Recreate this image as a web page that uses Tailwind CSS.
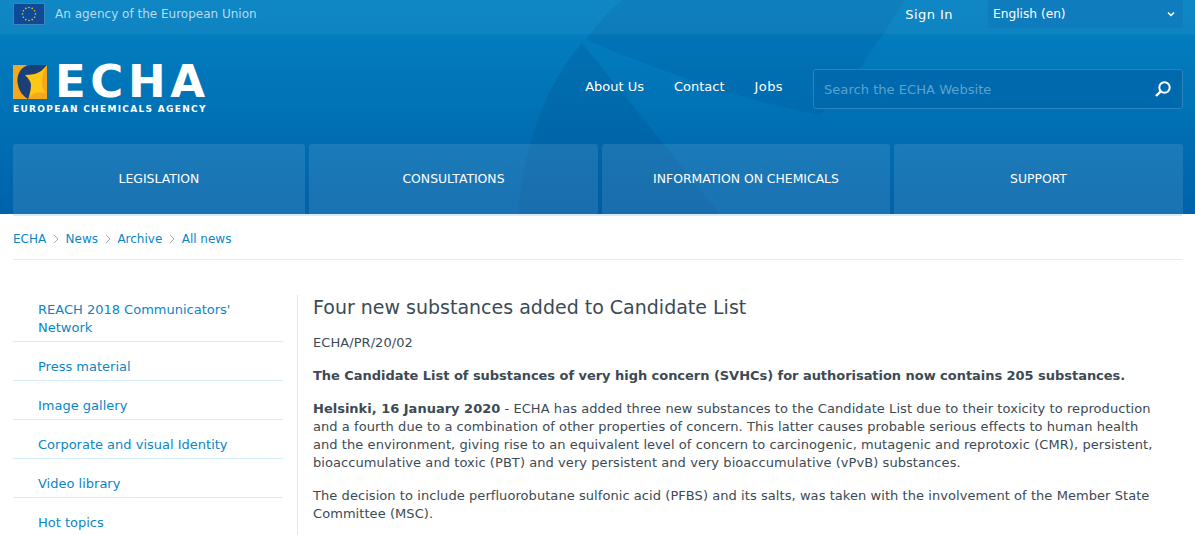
<!DOCTYPE html>
<html lang="en">
<head>
  <meta charset="UTF-8" />
  <title>Four new substances added to Candidate List - ECHA</title>
  <script src="https://cdn.jsdelivr.net/npm/@tailwindcss/browser@4"></script>
</head>
<body class="bg-white font-['DejaVu_Sans','Liberation_Sans',sans-serif] text-[13px] text-[#3c4a54] overflow-hidden h-[535px]">

  <!-- Header -->
  <header class="relative h-[214px] bg-gradient-to-b from-[#0382c2] to-[#0062aa] overflow-hidden">
    <svg class="absolute inset-0" width="1195" height="214" viewBox="0 0 1195 214">
      <path d="M582 43 C545 85 522 150 518 214 L720 214 Z" fill="#00508f" fill-opacity="0.24"/>
      <path d="M586 40 C640 62 720 95 820 115 C850 85 880 40 905 0 L622 0 C608 12 595 26 586 40 Z" fill="#00508f" fill-opacity="0.18"/>
    </svg>

    <!-- Top bar -->
    <div class="relative h-[34px] bg-white/5 flex items-start pl-[13px] pr-[12px]">
      <div class="flex items-center h-[28px] gap-[10px]">
        <svg width="32" height="22" viewBox="0 0 32 22" class="shrink-0">
          <rect x="0.5" y="0.5" width="31" height="21" fill="#0f4a96" stroke="#3f85bd"/>
          <g fill="#e6d13a">
            <circle cx="16" cy="4.5" r="0.8"/><circle cx="19.2" cy="5.4" r="0.8"/><circle cx="21.6" cy="7.8" r="0.8"/>
            <circle cx="22.5" cy="11" r="0.8"/><circle cx="21.6" cy="14.2" r="0.8"/><circle cx="19.2" cy="16.6" r="0.8"/>
            <circle cx="16" cy="17.5" r="0.8"/><circle cx="12.8" cy="16.6" r="0.8"/><circle cx="10.4" cy="14.2" r="0.8"/>
            <circle cx="9.5" cy="11" r="0.8"/><circle cx="10.4" cy="7.8" r="0.8"/><circle cx="12.8" cy="5.4" r="0.8"/>
          </g>
        </svg>
        <span class="text-[12px] text-[#b5dcef]">An agency of the European Union</span>
      </div>
      <a class="ml-auto mt-[5px] text-[13px] tracking-[0.45px] text-white">Sign In</a>
      <div class="ml-[35px] w-[195px] h-[28px] bg-[#0f7dbd] flex items-center justify-between pl-[5px] pr-[8px] text-[12.2px] text-white">
        <span>English (en)</span>
        <svg width="8" height="6" viewBox="0 0 8 6"><path d="M1 1.5 L4 4.5 L7 1.5" fill="none" stroke="#fff" stroke-width="1.5"/></svg>
      </div>
    </div>

    <!-- Logo row -->
    <div class="relative flex items-start pl-[13px] pr-[12px] pt-[30px] h-[110px]">
      <div>
        <div class="flex items-center gap-[8px] h-[36px]">
          <svg width="34" height="34" viewBox="0 0 34 34" class="shrink-0">
            <rect width="34" height="34" fill="#f5a81c"/>
            <path d="M34 0 L15 0 C6 3 3 12 5 20 C6 26 10 31 15 34 L20 26 L24 12 Z" fill="#1d3f78"/>
            <path d="M33.5 0.5 C29 6 25 10 12 10 C16 14 18 17 18 20 C18 24 17 28 15.5 33 C19 28 25 26 33 28.5 C29 23 26 17 33.5 0.5 Z" fill="#fdc813"/>
          </svg>
          <span class="inline-block text-[45px] leading-[36px] font-bold text-white tracking-[4.6px] whitespace-nowrap">ECHA</span>
        </div>
        <div class="mt-[3px] text-[9px] leading-[12px] font-bold tracking-[1.31px] text-white whitespace-nowrap">EUROPEAN CHEMICALS AGENCY</div>
      </div>
      <nav class="ml-auto flex items-center gap-[30px] mt-[13px] text-[13px] text-white">
        <a>About Us</a>
        <a>Contact</a>
        <a class="tracking-[0.4px]">Jobs</a>
      </nav>
      <div class="ml-[30px] mt-[5px] w-[370px] h-[40px] rounded-[3px] border border-[#2a83bd] bg-[#0068ad] flex items-center justify-between pl-[10px] pr-[10px]">
        <span class="text-[#5aa3cf] text-[13.1px] mt-[1px]">Search the ECHA Website</span>
        <svg width="18" height="18" viewBox="0 0 18 18"><circle cx="10.5" cy="7.5" r="5.2" fill="none" stroke="#fff" stroke-width="2"/><path d="M6.7 11.3 L2 16" stroke="#fff" stroke-width="2.4"/></svg>
      </div>
    </div>

    <!-- Main nav -->
    <nav class="relative grid grid-cols-[292px_289px_288px_289px] gap-[4px] px-[13px] text-[12.4px] text-white">
      <a class="h-[70px] flex items-center justify-center rounded-t-[3px] bg-white/10">LEGISLATION</a>
      <a class="h-[70px] flex items-center justify-center rounded-t-[3px] bg-white/10">CONSULTATIONS</a>
      <a class="h-[70px] flex items-center justify-center rounded-t-[3px] bg-white/10">INFORMATION ON CHEMICALS</a>
      <a class="h-[70px] flex items-center justify-center rounded-t-[3px] bg-white/10">SUPPORT</a>
    </nav>
  </header>

  <div class="mx-[13px] h-[2px] bg-[#d6ecf8]"></div>

  <!-- Breadcrumb -->
  <div class="mx-[13px] h-[44px] pt-[2px] border-b border-[#e3edf1] flex items-center gap-[6.7px] text-[12px] text-[#0a86c6]">
    <a>ECHA</a>
    <svg width="6" height="10" viewBox="0 0 6 10"><path d="M1 1 L5 5 L1 9" fill="none" stroke="#a3adb3"/></svg>
    <a>News</a>
    <svg width="6" height="10" viewBox="0 0 6 10"><path d="M1 1 L5 5 L1 9" fill="none" stroke="#a3adb3"/></svg>
    <a>Archive</a>
    <svg width="6" height="10" viewBox="0 0 6 10"><path d="M1 1 L5 5 L1 9" fill="none" stroke="#a3adb3"/></svg>
    <a>All news</a>
  </div>

  <!-- Content -->
  <div class="flex px-[13px] pt-[35px]">
    <aside class="w-[270px] shrink-0 text-[13px] leading-[18px] text-[#0a86c6]">
      <a class="block pl-[25px] pt-[6px] pb-[4px] border-b border-[#d6ecf8]">REACH 2018 Communicators' Network</a>
      <a class="block pl-[25px] pt-[16px] pb-[4px] border-b border-[#d6ecf8]">Press material</a>
      <a class="block pl-[25px] pt-[16px] pb-[4px] border-b border-[#d6ecf8]">Image gallery</a>
      <a class="block pl-[25px] pt-[16px] pb-[4px] border-b border-[#d6ecf8]">Corporate and visual Identity</a>
      <a class="block pl-[25px] pt-[16px] pb-[4px] border-b border-[#d6ecf8]">Video library</a>
      <a class="block pl-[25px] pt-[16px] pb-[4px]">Hot topics</a>
    </aside>
    <main class="ml-[14px] border-l border-[#d6ecf8] pl-[15px] pr-[28px] leading-[18px] tracking-[0.065px] flex-1 h-[240px]">
      <h1 class="text-[19px] leading-[24px] tracking-normal mb-[15px]">Four new substances added to Candidate List</h1>
      <p class="mb-[15px]">ECHA/PR/20/02</p>
      <p class="mb-[15px] font-bold tracking-[-0.04px]">The Candidate List of substances of very high concern (SVHCs) for authorisation now contains 205 substances.</p>
      <p class="mb-[15px]"><b class="tracking-normal">Helsinki, 16 January 2020</b> - ECHA has added three new substances to the Candidate List due to their toxicity to reproduction and a fourth due to a combination of other properties of concern. This latter causes probable serious effects to human health and the environment, giving rise to an equivalent level of concern to carcinogenic, mutagenic and reprotoxic (CMR), persistent, bioaccumulative and toxic (PBT) and very persistent and very bioaccumulative (vPvB) substances.</p>
      <p>The decision to include perfluorobutane sulfonic acid (PFBS) and its salts, was taken with the involvement of the Member State Committee (MSC).</p>
    </main>
  </div>
</body>
</html>
